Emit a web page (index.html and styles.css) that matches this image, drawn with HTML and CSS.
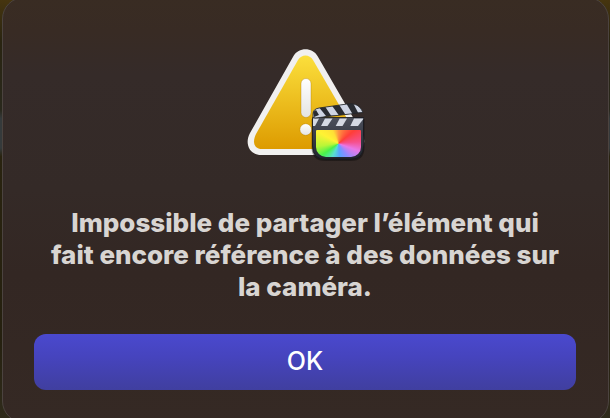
FILE: index.html
```html
<!DOCTYPE html>
<html lang="fr">
<head>
    <meta charset="UTF-8">
    <meta name="viewport" content="width=device-width, initial-scale=1.0">
    <title>Alerte</title>
    <link rel="stylesheet" href="styles.css">
</head>
<body>
    <main class="dialog" role="alertdialog" aria-labelledby="message">
        <svg class="icon" viewBox="10 12 120 116" aria-hidden="true">
            <defs>
                <linearGradient id="yellow" x1="0" y1="0" x2="0" y2="1">
                    <stop offset="0" stop-color="#fbdf3c"/>
                    <stop offset="1" stop-color="#dd9b00"/>
                </linearGradient>
                <linearGradient id="white" x1="0" y1="0" x2="0" y2="1">
                    <stop offset="0" stop-color="#ffffff"/>
                    <stop offset="1" stop-color="#e4e4e2"/>
                </linearGradient>
                <linearGradient id="slate" x1="0" y1="0" x2="0" y2="1">
                    <stop offset="0" stop-color="#4c505c"/>
                    <stop offset="1" stop-color="#20232c"/>
                </linearGradient>
                <clipPath id="stick">
                    <path d="M78 82V79Q78 74 84 73L112 69Q124 67 128 77.500L80 83Z"/>
                </clipPath>
            </defs>
            <!-- warning triangle -->
            <path fill="#f1f0ef" d="M58.500 21C63.500 12 77.500 12 82.500 21L127 98C133 109 126 120 115 120H26C15 120 9 109 15 98Z"/>
            <path fill="url(#yellow)" d="M63 25C66.500 19 74.500 19 78 25L121 99C125 107 121 114 114 114H27C19 114 17 107 21 99Z"/>
            <g stroke="#a87600" stroke-opacity=".35" stroke-width="1">
                <rect x="66" y="43.500" width="10" height="39" rx="5" fill="url(#white)"/>
                <circle cx="70.700" cy="94.500" r="5.800" fill="url(#white)"/>
            </g>
            <!-- clapperboard -->
            <path fill="#000000" fill-opacity=".35" d="M76.500 84H129.500V112Q129.500 126 116 126H90Q76.500 126 76.500 112Z"/>
            <path fill="url(#slate)" stroke="#15171d" stroke-width=".8" d="M77.500 82.500H128.500V111Q128.500 124.300 115.500 124.300H90.500Q77.500 124.300 77.500 111Z"/>
            <g fill="#d5d9e3">
                <path d="M78 83.500H84L80 91H78Z"/>
                <path d="M90 83.500H97.500L92.500 91H86Z"/>
                <path d="M104.700 83.500H112L107.500 91H100.700Z"/>
                <path d="M119 83.500H128.300V84L123 91H115.300Z"/>
            </g>
            <g clip-path="url(#stick)">
                <path fill="#292b31" d="M76 66H130V84H76Z"/>
                <path fill="#ced4e3" d="M76 76L83 71L91 81L82 84H76Z"/>
                <path fill="#292b31" d="M78 77L81 75L84 80L79 82Z"/>
                <path fill="#ced4e3" d="M89 70H96.500L104 80.500H96Z"/>
                <path fill="#ced4e3" d="M103 68H111L117.500 79H110Z"/>
                <path fill="#ced4e3" d="M117 66H124L130 77.500H123Z"/>
            </g>
            <path fill="none" stroke="#22242a" stroke-width=".8" d="M78 82V79Q78 74 84 73L112 69Q124 67 128 77.500L80 83Z"/>
            <foreignObject x="80.500" y="94.500" width="45" height="27">
                <div class="wheel"></div>
            </foreignObject>
        </svg>
        <h1 class="message" id="message">Impossible de partager l’élément qui fait encore référence à des données sur la caméra.</h1>
        <button class="ok" type="button">OK</button>
    </main>
</body>
</html>
```
FILE: styles.css
```css
*,
*::before,
*::after {
    box-sizing: border-box;
}
body {
    margin: 0;
    overflow: hidden;
    background: linear-gradient(#46350f, #292411 10%, #29281c 26%, #353a3b 28%, #353a3b 35%, #29230f 37%, #25200f 80%, #302c1c);
    font-family: Inter, "Liberation Sans", sans-serif;
}
.dialog {
    display: flex;
    flex-direction: column;
    align-items: center;
    margin: -3px 1px 0 2px;
    padding: 49px 32px 32px 31px;
    border: 1px solid #4b433f;
    border-radius: 22px;
    background: linear-gradient(#392c23, #382b24 8%, #352b29 18%, #342a27 45%, #332723 65%, #352924);
}
.icon {
    display: block;
    width: 120px;
    height: 116px;
}
.wheel {
    width: 45px;
    height: 27px;
    border-radius: 1px 1px 10px 10px;
    background: conic-gradient(#ff9440, #ff3e38 50deg, #f6508c 85deg, #e878e8 110deg, #8b8cff 145deg, #56a5ff 175deg, #58dfd0 205deg, #48f04c 235deg, #b8f638 262deg, #fff234 300deg, #ffdf36 335deg, #ff9440);
}
.message {
    margin: 44px 0 31px;
    padding: 0 15px;
    color: #d8d5d2;
    font-size: 26px;
    font-weight: 800;
    line-height: 32px;
    text-align: center;
}
.ok {
    width: 100%;
    height: 56px;
    padding: 0 0 2px;
    border: 0;
    border-radius: 12px;
    background: linear-gradient(#4a49ce, #4644be 40%, #403f9f);
    color: #ffffff;
    font-family: inherit;
    font-size: 25px;
    font-weight: 500;
}
```
